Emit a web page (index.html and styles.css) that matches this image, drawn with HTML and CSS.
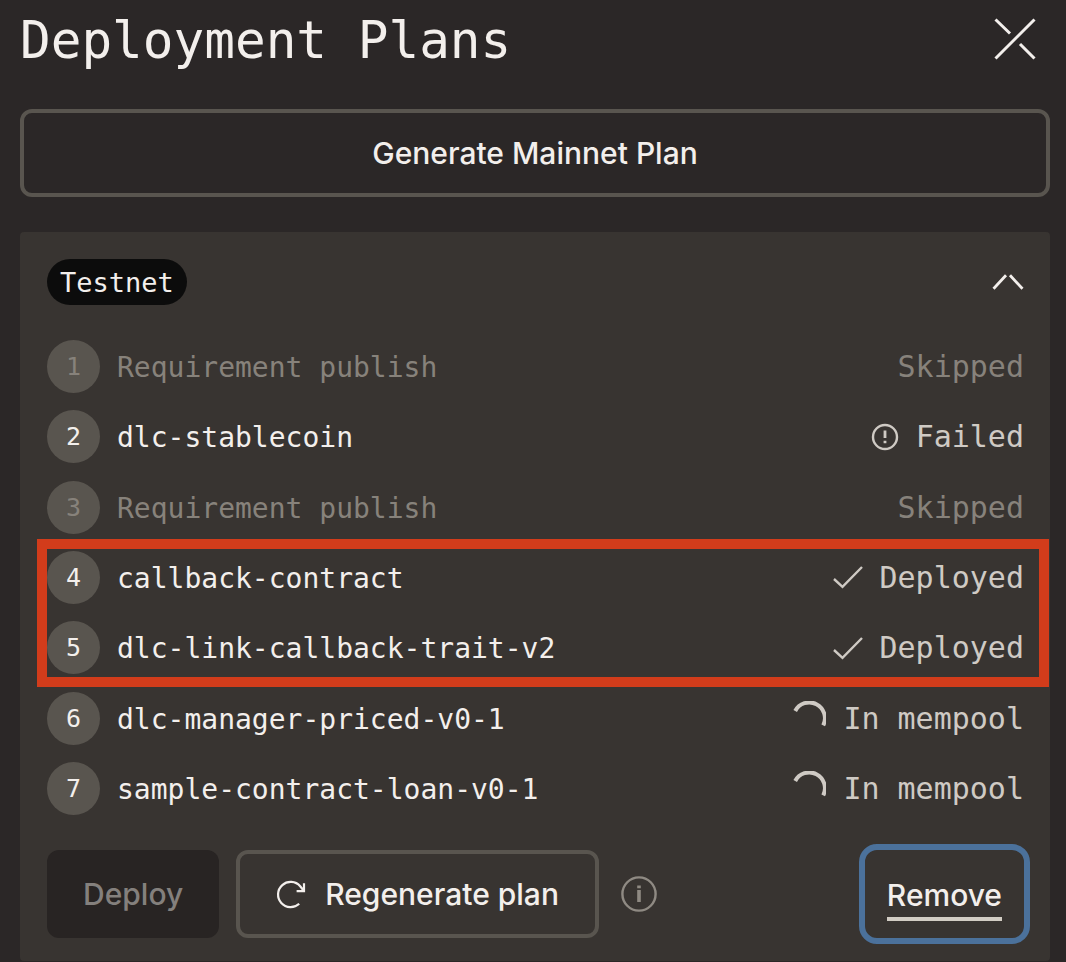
FILE: index.html
```html
<!DOCTYPE html>
<html lang="en">
<head>
<meta charset="utf-8">
<title>Deployment Plans</title>
<link rel="stylesheet" href="styles.css">
</head>
<body>
<main class="page">
  <header class="header">
    <h1 class="title">Deployment Plans</h1>
    <button class="icon-button close" type="button" aria-label="Close">
      <svg width="42" height="42" viewBox="0 0 42 42" fill="none" stroke="currentColor" stroke-width="3"><path d="M1.5 40.5 40.5 1.5M1.5 1.5 16 15.5M26 26 40.5 40.5"/></svg>
    </button>
  </header>

  <button class="button button-outline button-wide" type="button">Generate Mainnet Plan</button>

  <section class="panel">
    <div class="panel-head">
      <h2 class="network">Testnet</h2>
      <button class="icon-button" type="button" aria-label="Collapse">
        <svg width="32" height="18" viewBox="0 0 32 18" fill="none" stroke="currentColor" stroke-width="2.8"><path d="M1.5 15.8 14 2.3M18 2.3 30.5 15.8"/></svg>
      </button>
    </div>

    <ol class="steps">
      <li class="step step-muted"><span class="number">1</span><span class="name">Requirement publish</span><span class="status">Skipped</span></li>
      <li class="step"><span class="number">2</span><span class="name">dlc-stablecoin</span><span class="status">
        <svg width="28" height="28" viewBox="0 0 28 28" fill="none" stroke="currentColor" stroke-width="2.4"><circle cx="14" cy="14" r="12"/><path d="M14 7.5v7.5M14 17.8v2.4" stroke-width="2.8"/></svg>Failed</span></li>
      <li class="step step-muted"><span class="number">3</span><span class="name">Requirement publish</span><span class="status">Skipped</span></li>
      <li class="step"><span class="number">4</span><span class="name">callback-contract</span><span class="status">
        <svg width="30" height="24" viewBox="0 0 30 24" fill="none" stroke="currentColor" stroke-width="2.4"><path d="M1 14 9.5 21.8 29 2"/></svg>Deployed</span></li>
      <li class="step"><span class="number">5</span><span class="name">dlc-link-callback-trait-v2</span><span class="status">
        <svg width="30" height="24" viewBox="0 0 30 24" fill="none" stroke="currentColor" stroke-width="2.4"><path d="M1 14 9.5 21.8 29 2"/></svg>Deployed</span></li>
      <li class="step"><span class="number">6</span><span class="name">dlc-manager-priced-v0-1</span><span class="status">
        <svg width="34" height="34" viewBox="0 0 34 34" fill="none" stroke="currentColor" stroke-width="4"><path d="M3.2 10A15.3 15.3 0 0 1 31.2 24.400"/></svg>In mempool</span></li>
      <li class="step"><span class="number">7</span><span class="name">sample-contract-loan-v0-1</span><span class="status">
        <svg width="34" height="34" viewBox="0 0 34 34" fill="none" stroke="currentColor" stroke-width="4"><path d="M3.2 10A15.3 15.3 0 0 1 31.2 24.400"/></svg>In mempool</span></li>
      <li class="highlight" aria-hidden="true"></li>
    </ol>

    <div class="actions">
      <button class="button button-disabled" type="button" disabled>Deploy</button>
      <button class="button button-outline button-regenerate" type="button">
        <svg width="30" height="30" viewBox="0 0 30 30" fill="none" stroke="currentColor" stroke-width="2.2"><path d="M23.200 24.800A12.600 12.600 0 1 1 24.200 7.300L27.800 11.800M28 4.300V12.200H20.600"/></svg>
        Regenerate plan
      </button>
      <button class="icon-button info" type="button" aria-label="About deployment plans">
        <svg width="36" height="36" viewBox="0 0 36 36" fill="none" stroke="currentColor" stroke-width="2.4"><circle cx="18" cy="18" r="16.6"/><path d="M18 14v12M18 9.600v2.600" stroke-width="3.6"/></svg>
      </button>
      <button class="button button-remove" type="button"><span class="remove-label">Remove</span></button>
    </div>
  </section>
</main>
</body>
</html>
```
FILE: styles.css
```css
* {
  box-sizing: border-box;
}

body {
  margin: 0;
  background: #2b2727;
  color: #f3efec;
  font-family: "DejaVu Sans Mono", monospace;
  font-size: 28px;
}

.page {
  padding: 0 16px 0 20px;
}

.header {
  display: flex;
  align-items: center;
  justify-content: space-between;
  height: 78px;
  margin-bottom: 31px;
}

.title {
  margin: 0;
  padding-top: 3px;
  font-size: 51px;
  font-weight: 400;
  line-height: 60px;
}

.icon-button {
  display: flex;
  padding: 0;
  border: 0;
  background: none;
  color: inherit;
}

.close {
  margin-right: 14px;
}

.button {
  display: flex;
  align-items: center;
  justify-content: center;
  height: 88px;
  padding: 0 36px;
  border: 0;
  border-radius: 12px;
  background: none;
  color: inherit;
  font-family: Inter, sans-serif;
  font-size: 30px;
  font-weight: 500;
  line-height: 36px;
  white-space: nowrap;
}

.button-outline {
  border: 4px solid #59554f;
}

.button-wide {
  width: 100%;
}

.panel {
  margin: 35px 0 0;
  padding: 27px 26px 23px 27px;
  border-radius: 4px;
  background: #383431;
}

.panel-head {
  display: flex;
  align-items: center;
  justify-content: space-between;
}

.network {
  margin: 0;
  padding: 1px 13px 0;
  border-radius: 23px;
  background: #0c0c0c;
  font-size: 27px;
  font-weight: 400;
  line-height: 45px;
}

.steps {
  position: relative;
  display: flex;
  flex-direction: column;
  justify-content: space-between;
  min-height: 475px;
  margin: 35px 0;
  padding: 0;
  list-style: none;
}

.step {
  display: flex;
  align-items: center;
  gap: 17px;
}

.number {
  width: 53px;
  border-radius: 50%;
  background: #59554f;
  font-size: 25px;
  line-height: 53px;
  text-align: center;
}

.name {
  flex: 1;
  padding-top: 2px;
}

.status {
  display: flex;
  align-items: center;
  gap: 17px;
  color: #cfcac4;
  font-size: 30px;
}

.step-muted,
.step-muted .status {
  color: #87827b;
}

.highlight {
  position: absolute;
  top: 199px;
  right: -25px;
  left: -10px;
  height: 148px;
  border: 10px solid #d23c1b;
}

.actions {
  display: flex;
  align-items: center;
  gap: 17px;
}

.button-disabled {
  background: #282423;
  color: #84807d;
}

.button-regenerate {
  gap: 19px;
}

.info {
  margin-left: 5px;
  color: #8f8a83;
}

.button-remove {
  margin-left: auto;
  padding: 0 22px;
  outline: 6px solid #4b719b;
}

.remove-label {
  padding: 10px 0 4px;
  border-bottom: 4px solid #d2cdc4;
}
```
